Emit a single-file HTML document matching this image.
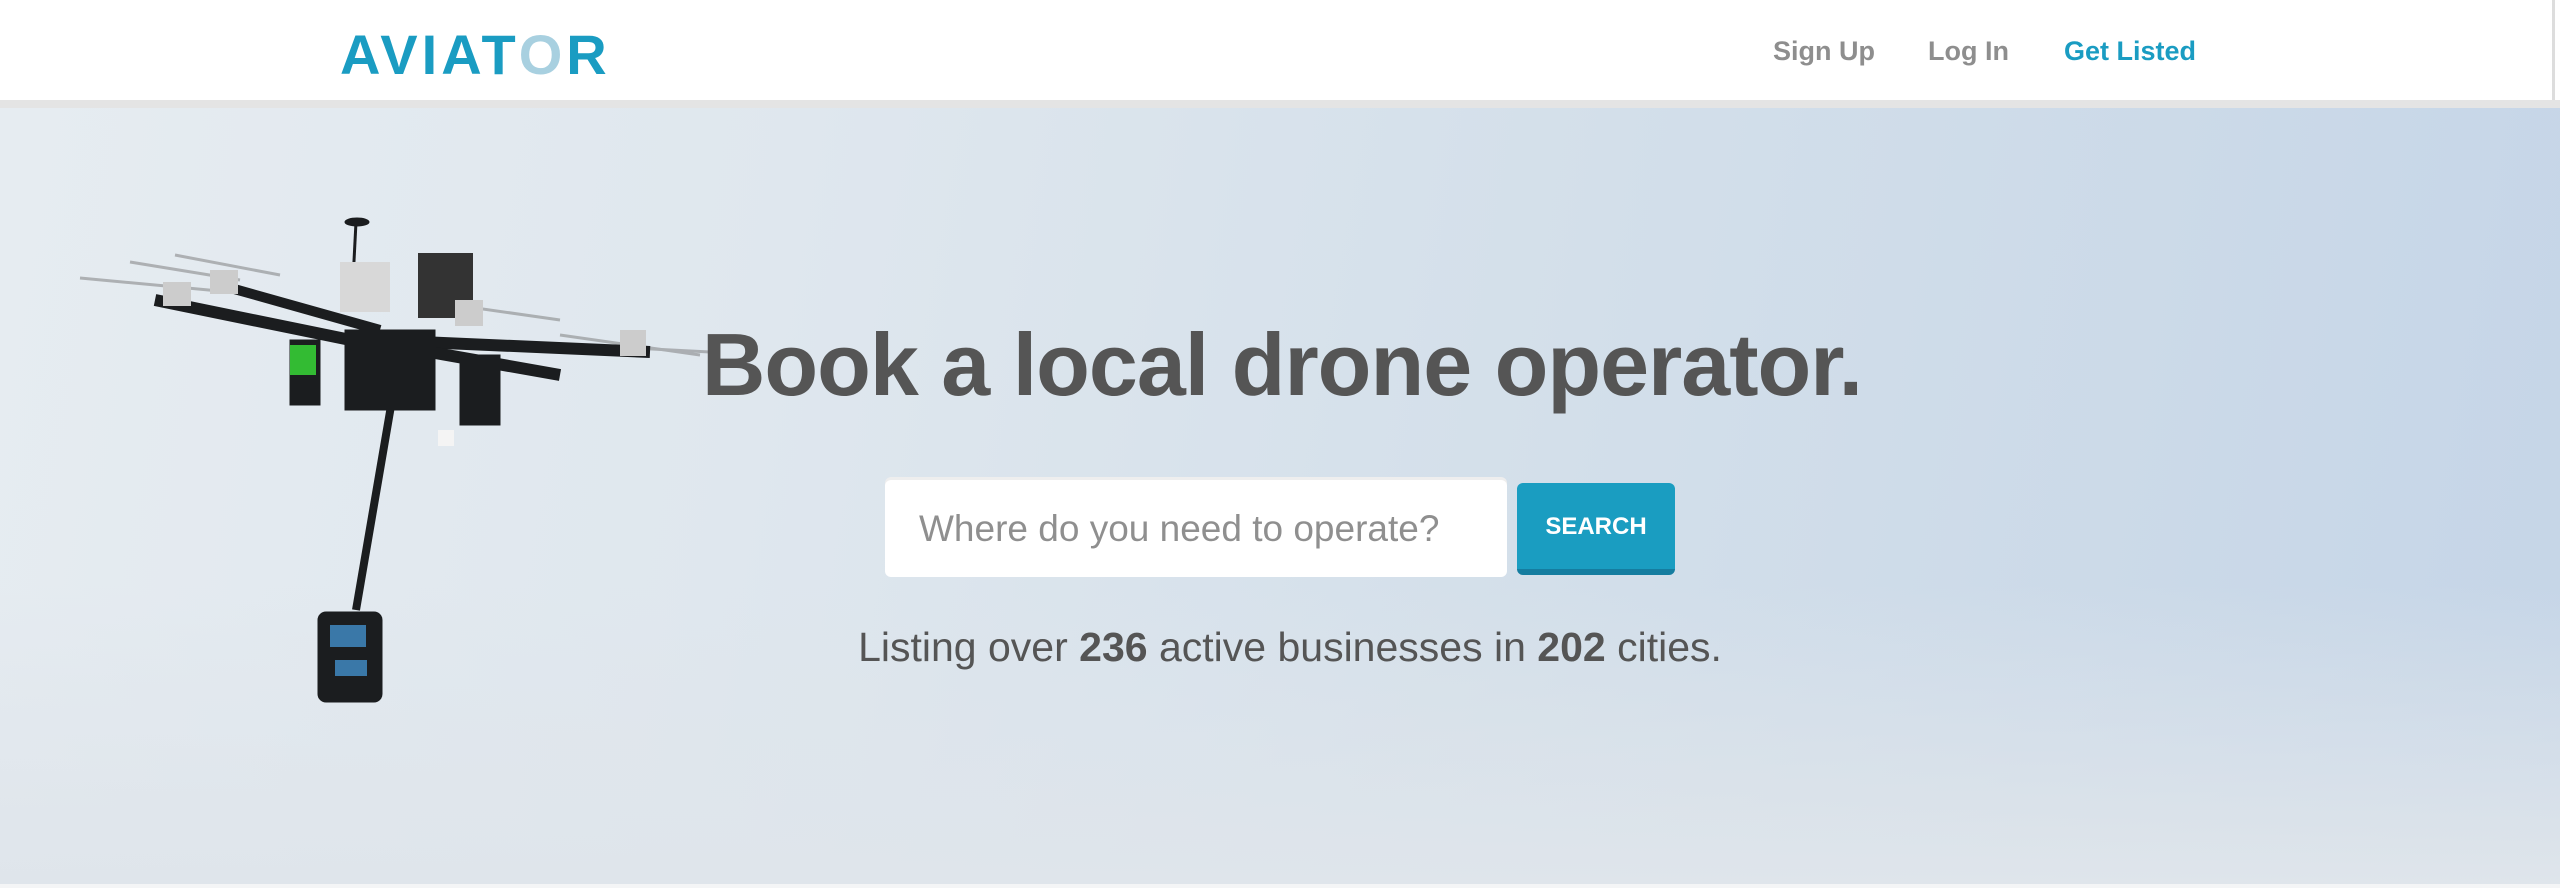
<!DOCTYPE html>
<html><head><meta charset="utf-8"><style>
html,body{margin:0;padding:0;width:2560px;height:888px;overflow:hidden;font-family:"Liberation Sans",sans-serif;}
.hdr{position:absolute;left:0;top:0;width:2552px;height:100px;background:#fff;border-right:3px solid #ddd;}
.bar{position:absolute;left:0;top:100px;width:2560px;height:8px;background:#e4e4e4;}
.hero{position:absolute;left:0;top:108px;width:2560px;height:776px;
background:linear-gradient(100deg,#e6ecf1 0%,#dfe7ee 30%,#d3dfea 60%,#c5d5e7 100%);}
.hero:after{content:"";position:absolute;left:0;right:0;bottom:0;height:300px;background:linear-gradient(180deg,rgba(225,231,237,0),#dfe5eb);}
.foot{position:absolute;left:0;top:884px;width:2560px;height:4px;background:#f4f5f6;}
.logo{position:absolute;left:340px;top:22px;font-size:56px;font-weight:bold;color:#1a9cc2;letter-spacing:4px;}
.nav{position:absolute;top:36px;font-size:27px;font-weight:bold;color:#8e8e8e;}
h1{position:absolute;left:0;width:2560px;text-align:center;top:314px;margin:0;font-size:88px;font-weight:bold;color:#555;letter-spacing:-1px;z-index:2;padding-left:2px}
.inp{position:absolute;left:885px;top:480px;width:622px;height:97px;background:#fff;border-radius:6px;box-shadow:0 -3px 0 #eee;z-index:2;}
.inp span{position:absolute;left:34px;top:28px;font-size:37px;color:#8f8f8f;}
.btn{position:absolute;left:1517px;top:483px;width:158px;height:92px;background:#1a9dc1;border-radius:6px;border-bottom:6px solid #157da0;box-sizing:border-box;color:#fff;font-weight:bold;font-size:24px;text-align:center;line-height:88px;z-index:2;}
.sub{position:absolute;left:0;width:2560px;text-align:center;top:624px;font-size:41px;color:#555;z-index:2;padding-left:10px}
svg{position:absolute;left:0;top:0;z-index:1}
</style></head><body>
<div class="hdr"></div><div class="bar"></div>
<div class="hero"></div><div class="foot"></div>
<div class="logo">AVIAT<span style="color:#a8d0e0">O</span>R</div>
<div class="nav" style="left:1773px">Sign Up</div>
<div class="nav" style="left:1928px">Log In</div>
<div class="nav" style="left:2064px;color:#1a9cc2">Get Listed</div>
<svg width="2560" height="888">
<g stroke="#777" stroke-width="3" opacity="0.5">
<line x1="80" y1="278" x2="230" y2="292"/><line x1="130" y1="262" x2="240" y2="280"/>
<line x1="175" y1="255" x2="280" y2="275"/><line x1="420" y1="300" x2="560" y2="320"/>
<line x1="560" y1="335" x2="700" y2="355"/><line x1="575" y1="345" x2="710" y2="352"/>
</g>
<g fill="#1b1d1f" stroke="#1b1d1f">
<line x1="155" y1="300" x2="375" y2="345" stroke-width="12"/>
<line x1="220" y1="285" x2="380" y2="330" stroke-width="10"/>
<line x1="375" y1="340" x2="650" y2="352" stroke-width="12"/>
<line x1="390" y1="345" x2="560" y2="375" stroke-width="12"/>
<line x1="392" y1="400" x2="356" y2="610" stroke-width="8"/>
<line x1="356" y1="222" x2="352" y2="300" stroke-width="3"/>
<ellipse cx="357" cy="222" rx="12" ry="4"/>
<rect x="345" y="330" width="90" height="80"/>
<rect x="290" y="340" width="30" height="65"/>
<rect x="460" y="355" width="40" height="70"/>
<rect x="318" y="612" width="64" height="90" rx="8"/>
</g>
<g><rect x="340" y="262" width="50" height="50" fill="#d8d8d8"/><rect x="418" y="253" width="55" height="65" fill="#333"/>
<rect x="163" y="282" width="28" height="24" fill="#ccc"/><rect x="210" y="270" width="28" height="24" fill="#ccc"/>
<rect x="455" y="300" width="28" height="26" fill="#ccc"/><rect x="620" y="330" width="26" height="26" fill="#ccc"/>
<rect x="438" y="430" width="16" height="16" fill="#f4f4f4"/></g>
<rect x="290" y="345" width="26" height="30" fill="#3b3"/>
<rect x="330" y="625" width="36" height="22" fill="#3a78a8"/><rect x="335" y="660" width="32" height="16" fill="#3a78a8"/>
</svg>
<h1>Book a local drone operator.</h1>
<div class="inp"><span>Where do you need to operate?</span></div>
<div class="btn">SEARCH</div>
<div class="sub">Listing over <b>236</b> active businesses in <b>202</b> cities.</div>
</body></html>
